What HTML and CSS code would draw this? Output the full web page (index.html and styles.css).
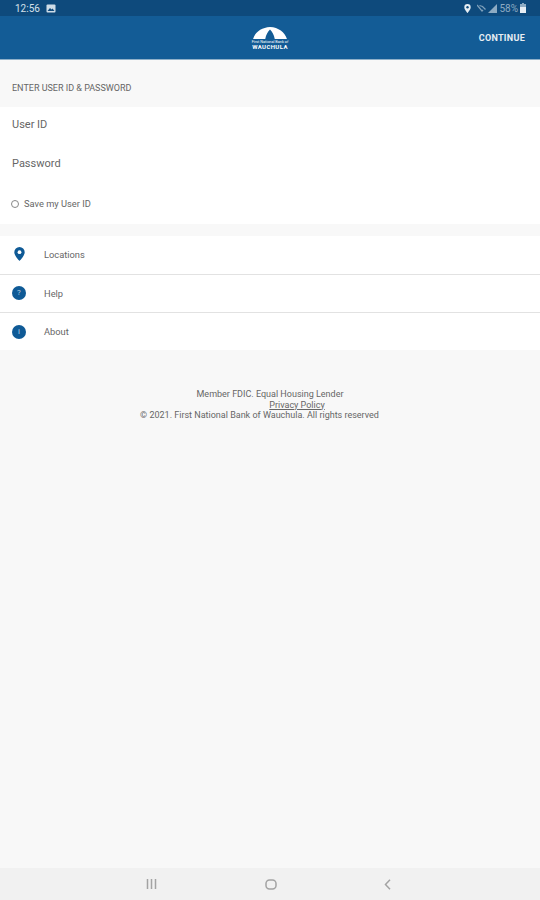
FILE: index.html
```html
<!doctype html>
<html>
    <head>
        <meta charset="utf-8">
        <title>First National Bank of Wauchula</title>
        <link rel="stylesheet" href="styles.css">
    </head>
    <body>
        <div class="status_bar">
            <span class="status_time">12:56</span>
            <svg class="status_icon" width="10" height="9" viewBox="0 0 10 9"><rect x="0.5" y="0.5" width="9" height="8" rx="1" fill="#cfdde8"/><path d="M1.500 7l2.500-3 1.500 1.500 1-1 2 2.500z" fill="#0e4a7c"/></svg>
            <span class="status_right">
                <svg width="7" height="9" viewBox="0 0 7 9"><path d="M3.500 0a3.200 3.200 0 0 0-3.200 3.200C.3 5.500 3.500 9 3.500 9s3.200-3.500 3.200-5.800A3.200 3.200 0 0 0 3.500 0z" fill="#e6eef4"/><circle cx="3.500" cy="3.200" r="1.200" fill="#0e4a7c"/></svg>
                <svg class="status_wifi" width="10" height="8" viewBox="0 0 10 8"><path d="M0 1l5 6 1-1.200M2.500 1.500l3 1 3 3" fill="none" stroke="#7fa0bb" stroke-width="1.300"/></svg>
                <svg class="status_signal" width="9" height="9" viewBox="0 0 9 9"><path d="M9 0v9H0z" fill="#8dabc3"/></svg>
                <span class="status_batt_text">58%</span>
                <svg width="6" height="10" viewBox="0 0 6 10"><path d="M2 0h2v1h2v9H0V1h2z" fill="#8dabc3"/><rect y="4" width="6" height="6" fill="#e6eef4"/></svg>
            </span>
        </div>
        <div class="header">
            <div class="logo">
                <svg width="36" height="12" viewBox="0 0 34 12" preserveAspectRatio="none"><path d="M1 12C3 5 9 .5 17 0c8 .5 14 5 16 12H21.500C20.800 8 19 4.500 17 2.500 15 4.500 13.200 8 12.500 12z" fill="#fff"/></svg>
                <div class="logo_small">First National Bank of</div>
                <div class="logo_name">WAUCHULA</div>
            </div>
            <span class="continue">CONTINUE</span>
        </div>
        <div class="section_title">ENTER USER ID &amp; PASSWORD</div>
        <div class="login_card">
            <div class="field">User ID</div>
            <div class="field">Password</div>
            <div class="save_row">
                <span class="radio"></span>
                <span>Save my User ID</span>
            </div>
        </div>
        <div class="menu">
            <div class="menu_row">
                <span class="menu_icon">
                    <svg width="11" height="14" viewBox="0 0 11 14"><path d="M5.500 0A5.200 5.200 0 0 0 .3 5.200C.3 8.800 5.500 14 5.500 14s5.200-5.200 5.200-8.800A5.200 5.200 0 0 0 5.500 0z" fill="#0f5a96"/><circle cx="5.500" cy="5.200" r="1.900" fill="#fff"/></svg>
                </span>
                <span>Locations</span>
            </div>
            <div class="menu_row">
                <span class="menu_icon"><span class="round_icon">?</span></span>
                <span>Help</span>
            </div>
            <div class="menu_row">
                <span class="menu_icon"><span class="round_icon">i</span></span>
                <span>About</span>
            </div>
        </div>
        <div class="footer">
            <div>Member FDIC. Equal Housing Lender</div>
            <div><a class="privacy">Privacy Policy</a></div>
            <div class="copyright">© 2021. First National Bank of Wauchula. All rights reserved</div>
        </div>
        <div class="nav_bar">
            <svg width="11" height="10" viewBox="0 0 11 10"><path d="M1.500 0v10M5.500 0v10M9.500 0v10" stroke="#a3a3a3" stroke-width="1.500"/></svg>
            <svg width="12" height="11" viewBox="0 0 12 11"><rect x="1" y="1" width="10" height="9" rx="3.500" fill="none" stroke="#a3a3a3" stroke-width="1.500"/></svg>
            <svg width="7" height="11" viewBox="0 0 7 11"><path d="M6 .8L1.500 5.500 6 10.200" fill="none" stroke="#a3a3a3" stroke-width="1.500"/></svg>
        </div>
    </body>
</html>
```

FILE: styles.css
```css
html, body {
    height:100%;
}

body {
    margin:0;
    display:flex;
    flex-direction:column;
    font-family:"Roboto", "Liberation Sans", sans-serif;
    background-color:#f8f8f8;
    color:#555555;
    overflow:hidden;
}

.status_bar {
    height:16px;
    display:flex;
    align-items:center;
    padding:0 14px 0 15px;
    background-color:#0e4a7c;
    color:#d5e1ea;
    font-size:10px;
}

.status_time {
    margin-right:6px;
}

.status_right {
    margin-left:auto;
    display:flex;
    align-items:center;
}

.status_wifi {
    margin-left:6px;
}

.status_signal {
    margin-left:1px;
}

.status_batt_text {
    margin:0 2px;
    color:#8dabc3;
}

.header {
    height:43px;
    display:flex;
    align-items:center;
    justify-content:center;
    position:relative;
    background-color:#135c96;
    border-bottom:1px solid #8fb0c9;
}

.logo {
    display:flex;
    flex-direction:column;
    align-items:center;
    color:#ffffff;
    line-height:1;
    margin-top:2px;
}

.logo_small {
    font-size:3.800px;
    margin-top:1px;
    white-space:nowrap;
}

.logo_name {
    font-size:6px;
    font-weight:bold;
    letter-spacing:0.4px;
}

.continue {
    position:absolute;
    right:15px;
    top:17px;
    font-size:9px;
    font-weight:bold;
    letter-spacing:0.3px;
    color:#e8eef3;
}

.section_title {
    height:47px;
    box-sizing:border-box;
    padding:23px 0 0 12px;
    font-size:9px;
    color:#666666;
}

.login_card {
    height:117px;
    background-color:#ffffff;
    color:#666666;
}

.field {
    height:39px;
    box-sizing:border-box;
    display:flex;
    align-items:center;
    padding:0 0 5px 12px;
    font-size:11px;
}

.save_row {
    height:39px;
    box-sizing:border-box;
    display:flex;
    align-items:center;
    padding:0 0 2px 11px;
    font-size:9.300px;
}

.radio {
    width:6px;
    height:6px;
    margin-right:5px;
    border:1px solid #888888;
    border-radius:50%;
}

.menu {
    margin-top:12px;
    background-color:#ffffff;
}

.menu_row {
    height:38px;
    padding-bottom:1px;
    box-sizing:border-box;
    display:flex;
    align-items:center;
    border-bottom:1px solid #e2e2e2;
    font-size:9.300px;
    color:#666666;
}

.menu_row:first-child {
    height:39px;
    padding-bottom:2px;
}

.menu_row:last-child {
    height:37px;
    padding-bottom:0;
    border-bottom:none;
}

.menu_icon {
    width:44px;
    padding-left:12px;
    box-sizing:border-box;
    display:flex;
    flex-shrink:0;
}

.menu_row:first-child .menu_icon {
    padding-left:14px;
}

.round_icon {
    width:14px;
    height:14px;
    border-radius:50%;
    background-color:#0f5a96;
    color:#b9d0e2;
    font-size:8px;
    line-height:14px;
    text-align:center;
}

.footer {
    margin-top:39px;
    text-align:center;
    font-size:9px;
    line-height:10.500px;
    color:#666666;
}

.privacy {
    display:inline-block;
    margin-left:54px;
    text-decoration:underline;
}

.copyright {
    padding-right:21px;
}

.nav_bar {
    margin-top:auto;
    height:32px;
    display:flex;
    align-items:center;
    padding:0 149px 0 146px;
    justify-content:space-between;
    background-color:#f1f1f1;
}
```
